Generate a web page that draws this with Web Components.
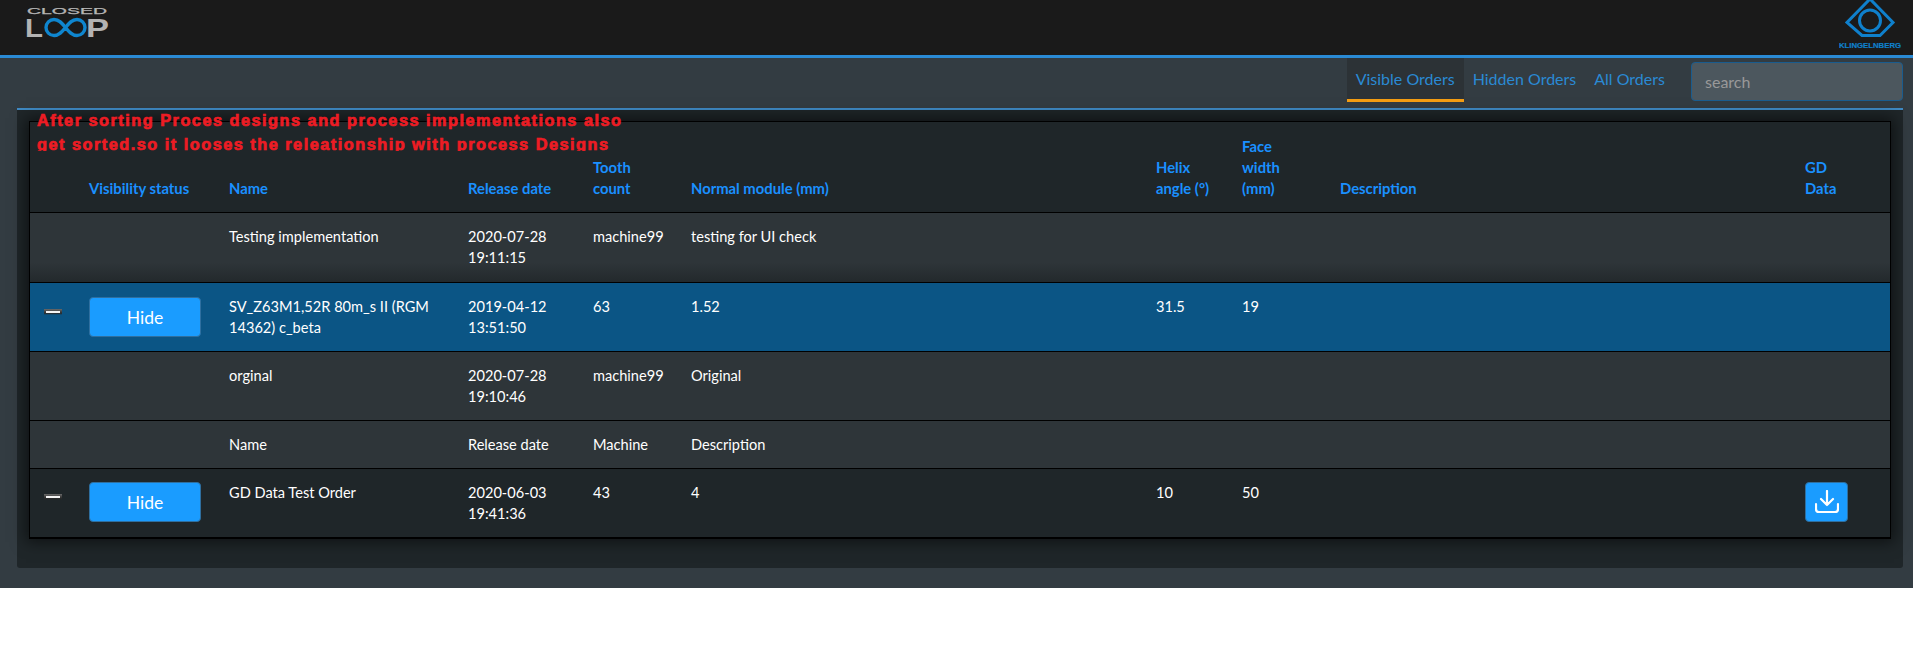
<!DOCTYPE html>
<html><head><meta charset="utf-8"><title>Closed Loop</title>
<style>html,body{margin:0;background:#fff;font-family:Lato,"Open Sans",sans-serif}</style></head>
<body>
<closed-app></closed-app>
<script>
class AppHeader extends HTMLElement{constructor(){super();this.attachShadow({mode:'open'}).innerHTML=`
<style>
:host{display:flex;justify-content:space-between;height:55px;background:#1a1a1a;border-bottom:3px solid #2a8ad4;overflow:hidden}
svg{display:block;overflow:hidden}
.a{margin-left:26px}.b{margin-right:9px}
</style>
<svg class="a" width="86" height="42" viewBox="0 0 86 42">
 <text x="1" y="13.500" font-family="Liberation Sans" font-size="9" textLength="80" lengthAdjust="spacingAndGlyphs" fill="#b5b5b5" stroke="#b5b5b5" stroke-width=".25">CLOSED</text>
 <text x="-1" y="37" font-family="Liberation Sans" font-weight="700" font-size="26" textLength="18" lengthAdjust="spacingAndGlyphs" fill="#b3b3b3">L</text>
 <path d="M39.500 27.500C36 23 33 19.500 28 19.500a8 8 0 0 0 0 16C33 35.500 36 32 39.500 27.500S46 19.500 51 19.500a8 8 0 0 1 0 16C46 35.500 43 32 39.500 27.500z" fill="none" stroke="#0f86cf" stroke-width="3.400"/>
 <text x="60" y="37" font-family="Liberation Sans" font-weight="700" font-size="26" textLength="23" lengthAdjust="spacingAndGlyphs" fill="#b3b3b3">P</text>
</svg>
<svg class="b" width="65" height="53" viewBox="0 0 65 53">
 <path d="M31 -1 54 22.500 41 35.500H23L8 22.500Z" fill="none" stroke="#0f80cc" stroke-width="3"/>
 <circle cx="31" cy="20.500" r="10.500" fill="none" stroke="#0f80cc" stroke-width="3"/>
 <text x="0" y="47.500" font-family="Liberation Sans" font-weight="700" font-size="8" textLength="62" lengthAdjust="spacingAndGlyphs" fill="#0f80cc" stroke="#0f80cc" stroke-width=".2">KLINGELNBERG</text>
</svg>`}}
customElements.define('app-header',AppHeader);

class NavTabs extends HTMLElement{constructor(){super();this.attachShadow({mode:'open'}).innerHTML=`
<style>
:host{display:flex;justify-content:flex-end;align-items:flex-start;height:50px;padding-right:10px;font:16px/21px Lato,sans-serif}
a{display:block;height:41px;padding:0 9px;line-height:42px;color:#2a8ad4;border-bottom:3px solid transparent}
a.on{background:#2c3236;border-bottom-color:#f39c12}
.s{margin:4px 0 0 17px;box-sizing:border-box;width:212px;height:39px;background:#4c575e;border:1px solid #1a5c8e;border-radius:4px;color:#999;padding:0 13px;line-height:37px;font-size:16px}
</style>
<a class="on">Visible Orders</a><a>Hidden Orders</a><a>All Orders</a><div class="s">search</div>`}}
customElements.define('nav-tabs',NavTabs);

class ExpandIcon extends HTMLElement{constructor(){super();this.attachShadow({mode:'open'}).innerHTML=`
<style>:host{display:block;width:18px;height:6px;margin:var(--it,13px) 0 0 5px;box-sizing:border-box;padding:2px;background:linear-gradient(#6a6a6a,#2a2a2a 70%,transparent)}
i{display:block;height:2px;background:#f4f4f4}</style><i></i>`}}
customElements.define('expand-icon',ExpandIcon);

class BlueBtn extends HTMLElement{constructor(){super();this.attachShadow({mode:'open'}).innerHTML=`
<style>:host{display:flex;align-items:center;justify-content:center;box-sizing:border-box;width:var(--w,112px);height:40px;margin-top:var(--bt,1px);background:#1a9cff;border:1px solid #2f6f9f;border-radius:4px;color:#fff;font:17.500px Lato,sans-serif}</style><slot></slot>`}}
customElements.define('blue-btn',BlueBtn);

const col=[50,140,239,125,98,465,86,98,465,94];
const rows=[
 {c:'a b',t:['','','Testing implementation','2020-07-28<br>19:11:15','machine99','testing for UI check']},
 {c:'s',x:1,t:['','<blue-btn>Hide</blue-btn>','SV_Z63M1,52R 80m_s II (RGM 14362) c_beta','2019-04-12<br>13:51:50','63','1.52','31.5','19','','']},
 {c:'a',t:['','','orginal','2020-07-28<br>19:10:46','machine99','Original']},
 {c:'a h',t:['','','Name','Release date','Machine','Description']},
 {c:'d',x:1,t:['','<blue-btn>Hide</blue-btn>','GD Data Test Order','2020-06-03<br>19:41:36','43','4','10','50','','<blue-btn style="--w:43px"><svg width="24" height="24" viewBox="0 0 24 24" fill="none" stroke="#fff" stroke-width="2.200" stroke-linecap="round" stroke-linejoin="round"><path d="M12 1v14M6 9l6 6 6-6M1 14v5a3 3 0 0 0 3 3h16a3 3 0 0 0 3-3v-5"/></svg></blue-btn>']}
];
const heads=['','Visibility status','Name','Release date','Tooth<br>count','Normal module (mm)','Helix<br>angle (°)','Face<br>width<br>(mm)','Description','GD<br>Data'];
class OrderTable extends HTMLElement{constructor(){super();
const body=rows.map(r=>{let cells=[];for(let i=0;i<10;i++){let v=r.t[i]||'';if(i==0&&r.x)v='<expand-icon></expand-icon>';cells.push('<td>'+v+'</td>')}return `<tr class="${r.c}">${cells.join('')}</tr>`}).join('');
this.attachShadow({mode:'open'}).innerHTML=`
<style>
:host{display:block;border:1px solid #000;background:#1f2629;box-shadow:0 0 14px 3px rgba(0,0,0,.55);font:14.600px/21px Lato,sans-serif;color:#fff}
table{border-collapse:separate;border-spacing:0;table-layout:fixed;width:1860px}
th{height:91px;padding:0 9px 13px;box-sizing:border-box;vertical-align:bottom;text-align:left;color:#1a90ff;font-weight:700;font-size:14.800px;border-bottom:1px solid #000;background:#1f2629}
td{padding:13px 9px 13px;vertical-align:top;border-bottom:1px solid #000;height:42px}
tr.a td{background:#2e3539}
tr.b td{background:linear-gradient(#2e3539 72%,#23292c);padding-bottom:14px}
tr.s td{background:#0b5585}
tr.d td{background:#1f2629;--bt:0px;--it:12px;padding:13px 9px}
tr.h td{padding:13px 9px;height:21px}
</style>
<table><colgroup>${col.map(w=>`<col style="width:${w}px">`).join('')}</colgroup>
<thead><tr>${heads.map(h=>`<th>${h}</th>`).join('')}</tr></thead>
<tbody>${body}</tbody></table>`}}
customElements.define('order-table',OrderTable);

class NoteOverlay extends HTMLElement{constructor(){super();this.attachShadow({mode:'open'}).innerHTML=`
<style>:host{position:absolute;left:37px;top:108px;height:43px;overflow:hidden;white-space:nowrap;color:#ed1c24;font:700 16.300px/24px "Liberation Sans",Arial,sans-serif;letter-spacing:1.500px;-webkit-text-stroke:.7px #ed1c24}
</style><div>After sorting Proces designs and process implementations also</div><div>get sorted.so it looses the releationship with process Designs</div>`}}
customElements.define('note-overlay',NoteOverlay);

class OrderPanel extends HTMLElement{constructor(){super();this.attachShadow({mode:'open'}).innerHTML=`
<style>:host{display:block;margin:0 10px 0 17px;height:460px;box-sizing:border-box;border-top:2px solid #3f8ac4;background:#1f2629;border-radius:0 0 3px 3px;padding:11px 12px 0}</style><slot></slot>`}}
customElements.define('order-panel',OrderPanel);

class ClosedApp extends HTMLElement{constructor(){super();this.attachShadow({mode:'open'}).innerHTML=`
<style>:host{display:block;position:relative;height:588px;background:#333c42;overflow:hidden}</style>
<app-header></app-header><nav-tabs></nav-tabs><order-panel><order-table></order-table></order-panel><note-overlay></note-overlay>`}}
customElements.define('closed-app',ClosedApp);
</script>
</body></html>
